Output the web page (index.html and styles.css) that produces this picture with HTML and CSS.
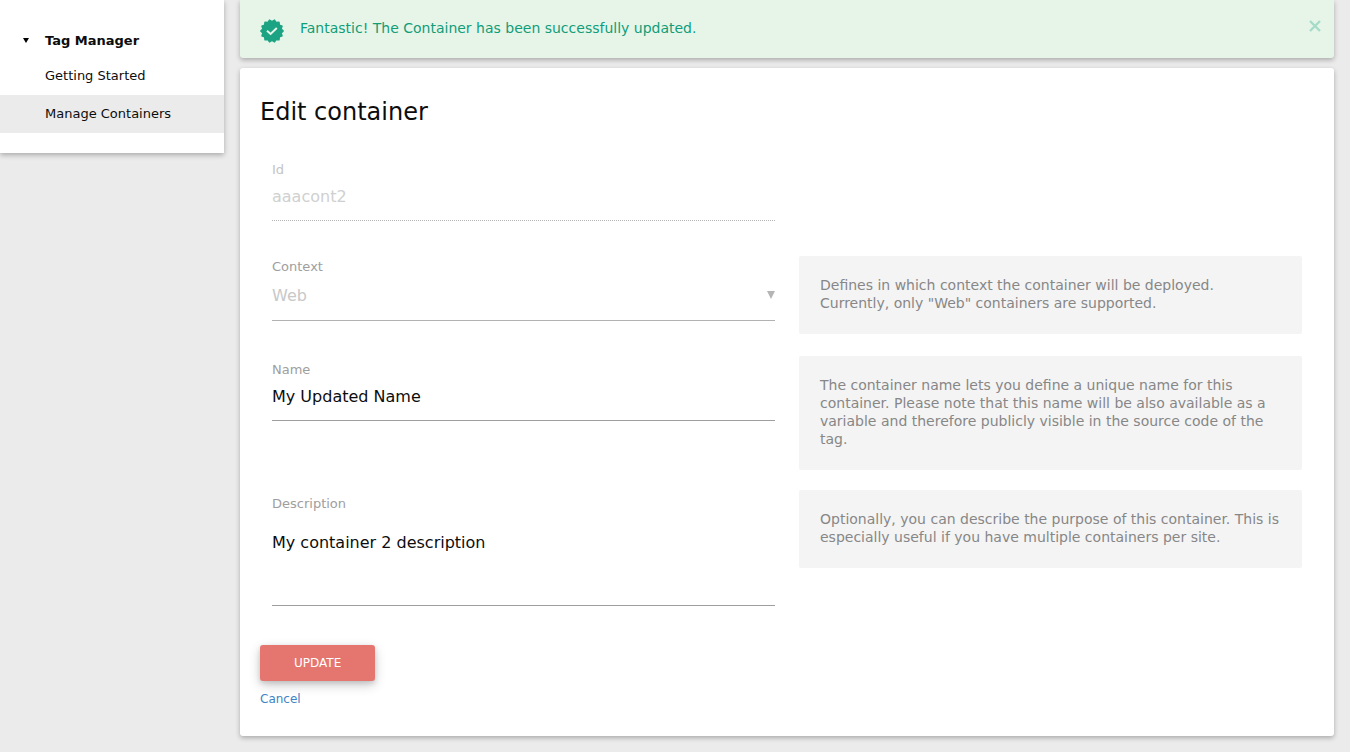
FILE: index.html
```html
<!DOCTYPE html>
<html lang="en">
<head>
<meta charset="utf-8">
<title>Edit container - Tag Manager</title>
<link rel="stylesheet" href="styles.css">
</head>
<body>
<div class="layout">
  <nav class="sidebar">
    <button type="button" class="menu-title"><svg class="caret" viewBox="0 0 6 5" aria-hidden="true"><path d="M0 0h6L3 5z"/></svg>Tag Manager</button>
    <a class="menu-item" href="#">Getting Started</a>
    <a class="menu-item active" href="#">Manage Containers</a>
  </nav>
  <main class="content">
    <div class="alert" role="status">
      <svg class="badge" viewBox="-12 -12 24 24" aria-hidden="true">
        <path class="scallop" d="M11.2 0L9.2 2.1L10.1 4.9L7.4 5.9L7 8.8L4.1 8.5L2.5 10.9L0 9.4L-2.5 10.9L-4.1 8.5L-7 8.8L-7.4 5.9L-10.1 4.9L-9.2 2.1L-11.2 0L-9.2 -2.1L-10.1 -4.9L-7.4 -5.9L-7 -8.8L-4.1 -8.5L-2.5 -10.9L0 -9.4L2.5 -10.9L4.1 -8.5L7 -8.8L7.4 -5.9L10.1 -4.9L9.2 -2.1Z"/>
        <path class="tick" d="M-5 -.2L-1.4 3L4.8 -3"/>
      </svg>
      <p class="alert-text">Fantastic! The Container has been successfully updated.</p>
      <button type="button" class="close" aria-label="Close"><svg viewBox="0 0 12 12" aria-hidden="true"><path d="M1 1L11 11M11 1L1 11"/></svg></button>
    </div>
    <section class="card">
      <h2 class="title">Edit container</h2>
      <form>
        <div class="rows">
          <div class="row">
            <div class="field"><label class="muted" for="cid">Id</label><input id="cid" type="text" value="aaacont2" disabled></div>
          </div>
          <div class="row">
            <div class="field select-field"><label for="context">Context</label>
              <div class="select-wrap"><select id="context" disabled><option>Web</option></select><svg class="arrow" viewBox="0 0 8 8" aria-hidden="true"><path d="M0 0h8L4 8z"/></svg></div>
            </div>
            <div class="help">Defines in which context the container will be deployed. Currently, only "Web" containers are supported.</div>
          </div>
          <div class="row">
            <div class="field"><label for="name">Name</label><input id="name" type="text" value="My Updated Name"></div>
            <div class="help">The container name lets you define a unique name for this container. Please note that this name will be also available as a variable and therefore publicly visible in the source code of the tag.</div>
          </div>
          <div class="row">
            <div class="field"><label for="desc">Description</label><textarea id="desc">My container 2 description</textarea></div>
            <div class="help">Optionally, you can describe the purpose of this container. This is especially useful if you have multiple containers per site.</div>
          </div>
        </div>
        <button type="submit" class="update">Update</button>
        <a class="cancel" href="#">Cancel</a>
      </form>
    </section>
  </main>
</div>
</body>
</html>
```
FILE: styles.css
```css
* { box-sizing: border-box; }
body {
  margin: 0;
  background: #ebebeb;
  color: #0d0d0d;
  font-family: "DejaVu Sans", sans-serif;
  font-size: 13px;
}
button, input, select, textarea { font-family: inherit; margin: 0; }
.layout { display: flex; align-items: flex-start; gap: 16px; padding-right: 16px; }
.sidebar, .alert, .card { box-shadow: 0 2px 5px 0 rgba(0,0,0,.28); }
.sidebar {
  display: flex;
  flex-direction: column;
  flex: 0 0 224px;
  padding: 24px 0 20px;
  background: #fff;
}
.menu-title {
  display: flex;
  align-items: center;
  gap: 16px;
  padding: 0 23px;
  border: 0;
  background: none;
  color: inherit;
  font-size: 13px;
  font-weight: bold;
  line-height: 33px;
}
.caret { width: 6px; height: 5px; }
.menu-item {
  padding: 0 45px;
  color: inherit;
  line-height: 38px;
  text-decoration: none;
}
.active { background: #ebebeb; }
.content { flex: 1; min-width: 0; padding-bottom: 16px; }
.alert {
  display: flex;
  align-items: flex-start;
  gap: 16px;
  padding: 19px 13px 15px 20px;
  border-radius: 0 0 3px 3px;
  background: #e7f5e9;
  color: #109d78;
}
.badge { width: 24px; height: 24px; }
.scallop { fill: #1ca383; stroke: #1ca383; stroke-width: 1.4; stroke-linejoin: round; }
.tick { fill: none; stroke: #e7f5e9; stroke-width: 2; }
.alert-text { flex: 1; margin: 0; font-size: 14px; line-height: 18px; }
.close { padding: 1px 0 0; border: 0; background: none; }
.close svg {
  display: block;
  width: 12px;
  height: 12px;
  stroke: #a5dcc9;
  stroke-width: 2.4;
}
.card {
  margin-top: 10px;
  padding: 28px 20px;
  border-radius: 3px;
  background: #fff;
}
.title { margin: 0 0 28px; font-size: 24px; font-weight: normal; line-height: 32px; }
.rows { display: grid; gap: 20px; padding: 0 12px; }
.row {
  display: grid;
  grid-template-columns: 1fr 1fr;
  align-items: start;
  gap: 24px;
  min-height: 80px;
}
.field { display: flex; flex-direction: column; padding-top: 6px; }
.select-field { padding-top: 3px; }
.field label { color: #9e9e9e; line-height: 16px; }
.field .muted { color: #c4c4c4; }
.field input, .field select, .field textarea {
  width: 100%;
  padding: 0;
  border: 0;
  border-bottom: 1px solid #9e9e9e;
  border-radius: 0;
  outline: 0;
  background: transparent;
  color: #0d0d0d;
  font-size: 16px;
}
.field input { height: 43px; padding-bottom: 6px; }
.field input:disabled { border-bottom: 1px dotted #b5b5b5; color: #d0d0d0; }
.select-wrap { position: relative; }
.field select {
  display: block;
  height: 46px;
  padding-bottom: 4px;
  border-bottom-color: #b2b2b2;
  color: #c8c8c8;
  opacity: 1;
  appearance: none;
}
.arrow { position: absolute; top: 16px; right: 0; width: 8px; height: 8px; fill: #b5b5b5; pointer-events: none; }
.field textarea {
  display: block;
  height: 94px;
  padding-top: 21px;
  line-height: 20px;
  resize: none;
}
.row:last-child { min-height: 135px; }
.help {
  padding: 20px 20px 22px 21px;
  border-radius: 2px;
  background: #f4f4f4;
  color: #878787;
  font-size: 14px;
  line-height: 18px;
}
.update {
  display: block;
  margin-top: 20px;
  padding: 0 34px;
  border: 0;
  border-radius: 3px;
  background: #e5756f;
  box-shadow: 0 4px 12px 0 rgba(0,0,0,.2), 0 2px 5px 0 rgba(0,0,0,.12);
  color: #fff;
  font-size: 12px;
  line-height: 36px;
  text-transform: uppercase;
}
.cancel {
  display: inline-block;
  margin-top: 9px;
  color: #4183c4;
  font-size: 12px;
  line-height: 18px;
  text-decoration: none;
}
```
